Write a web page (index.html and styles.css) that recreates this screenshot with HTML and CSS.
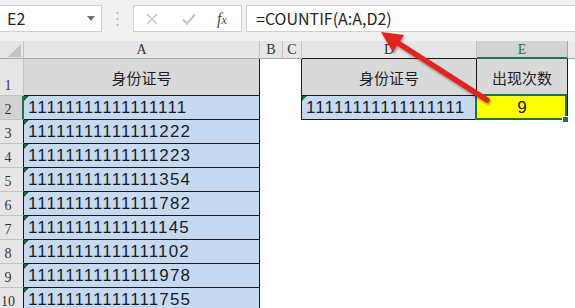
FILE: index.html
```html
<!DOCTYPE html>
<html>
<head>
<meta charset="utf-8">
<link rel="stylesheet" href="styles.css">
</head>
<body>
<div class="app">
  <div class="toolbar">
    <div class="namebox">
      <span>E2</span>
      <svg class="dd" width="8" height="5" viewBox="0 0 8 5"><path d="M0 0H8L4 5Z" fill="#707070"/></svg>
    </div>
    <div class="grip">
      <svg width="3" height="16" viewBox="0 0 3 16"><circle cx="1.5" cy="2" r="1" fill="#b0b0b0"/><circle cx="1.5" cy="8" r="1" fill="#b0b0b0"/><circle cx="1.5" cy="14" r="1" fill="#b0b0b0"/></svg>
    </div>
    <div class="fbtns">
      <svg width="12" height="12" viewBox="0 0 12 12"><path d="M1 1L11 11M11 1L1 11" stroke="#c4c4c4" stroke-width="1.6" fill="none"/></svg>
      <svg width="14" height="12" viewBox="0 0 14 12"><path d="M1 6.5L5 10.5L13 1.5" stroke="#c4c4c4" stroke-width="2.2" fill="none"/></svg>
      <span class="fx"><i>f</i><i class="x">x</i></span>
    </div>
    <div class="formula">=COUNTIF(A:A,D2)</div>
  </div>

  <div class="sheet">
    <!-- header row -->
    <div class="corner"><svg width="13" height="13" viewBox="0 0 13 13"><path d="M13 0V13H0Z" fill="#c4c4c4"/></svg></div>
    <div class="ch">A</div>
    <div class="ch">B</div>
    <div class="ch">C</div>
    <div class="ch chd">D</div>
    <div class="ch che">E</div>
    <div class="ch chf"></div>

    <!-- row 1 -->
    <div class="rh r1">1</div>
    <div class="hd">身份证号</div>
    <div class="blank"></div>
    <div class="blank edge"></div>
    <div class="hd">身份证号</div>
    <div class="hd">出现次数</div>
    <div class="blank"></div>

    <!-- row 2 -->
    <div class="rh rsel">2</div>
    <div class="num">11111111111111111</div>
    <div class="blank"></div>
    <div class="blank edge"></div>
    <div class="num">11111111111111111</div>
    <div class="res">9</div>
    <div class="blank"></div>

    <div class="rh">3</div>
    <div class="num">11111111111111222</div>
    <div class="blank"></div><div class="blank"></div><div class="blank"></div><div class="blank"></div><div class="blank"></div>

    <div class="rh">4</div>
    <div class="num">11111111111111223</div>
    <div class="blank"></div><div class="blank"></div><div class="blank"></div><div class="blank"></div><div class="blank"></div>

    <div class="rh">5</div>
    <div class="num">11111111111111354</div>
    <div class="blank"></div><div class="blank"></div><div class="blank"></div><div class="blank"></div><div class="blank"></div>

    <div class="rh">6</div>
    <div class="num">11111111111111782</div>
    <div class="blank"></div><div class="blank"></div><div class="blank"></div><div class="blank"></div><div class="blank"></div>

    <div class="rh">7</div>
    <div class="num">11111111111111145</div>
    <div class="blank"></div><div class="blank"></div><div class="blank"></div><div class="blank"></div><div class="blank"></div>

    <div class="rh">8</div>
    <div class="num">11111111111111102</div>
    <div class="blank"></div><div class="blank"></div><div class="blank"></div><div class="blank"></div><div class="blank"></div>

    <div class="rh">9</div>
    <div class="num">11111111111111978</div>
    <div class="blank"></div><div class="blank"></div><div class="blank"></div><div class="blank"></div><div class="blank"></div>

    <div class="rh">10</div>
    <div class="num">11111111111111755</div>
    <div class="blank"></div><div class="blank"></div><div class="blank"></div><div class="blank"></div><div class="blank"></div>
  </div>

  <svg class="arrow" width="575" height="308" viewBox="0 0 575 308">
    <defs>
      <filter id="sh" x="-20%" y="-20%" width="140%" height="140%">
        <feDropShadow dx="1" dy="2" stdDeviation="1.2" flood-color="#000" flood-opacity="0.35"/>
      </filter>
    </defs>
    <g filter="url(#sh)" fill="#e2201c" stroke="none">
      <path d="M487 100L398 43" stroke="#e2201c" stroke-width="5.5" stroke-linecap="round"/>
      <path d="M381 32L404 35L393 52Z"/>
    </g>
  </svg>
</div>
</body>
</html>
```

FILE: styles.css
```css
html, body {
  margin: 0;
  padding: 0;
  background: #ffffff;
}

.app {
  position: relative;
  width: 575px;
  height: 308px;
  overflow: hidden;
}

.toolbar {
  height: 41px;
  box-sizing: border-box;
  padding-top: 5px;
  background: #f1f1f1;
  display: flex;
  align-items: flex-start;
  font-family: "Noto Sans CJK SC", "Noto Sans", sans-serif;
  font-size: 16px;
  color: #262626;
}

.namebox {
  width: 102px;
  height: 27px;
  box-sizing: border-box;
  background: #fff;
  border: 1px solid #d0d0d0;
  border-left: none;
  display: flex;
  align-items: center;
  justify-content: space-between;
  padding: 0 6px 0 7px;
}

.namebox span {
  line-height: 25px;
}

.grip {
  width: 31px;
  height: 27px;
  display: flex;
  align-items: center;
  justify-content: center;
}

.fbtns {
  width: 109px;
  height: 27px;
  box-sizing: border-box;
  background: #fff;
  border: 1px solid #d0d0d0;
  display: flex;
  align-items: center;
  padding-left: 12px;
  gap: 24px;
}

.fx {
  font-family: "Liberation Serif", serif;
  font-size: 16px;
  color: #4a4a4a;
  margin-left: -3px;
}

.fx .x {
  font-size: 12px;
}

.formula {
  margin-left: 4px;
  flex: 1;
  height: 27px;
  box-sizing: border-box;
  background: #fff;
  border: 1px solid #d0d0d0;
  border-right: none;
  padding-left: 9px;
  line-height: 25px;
}

.sheet {
  display: grid;
  grid-template-columns: 24px 236px 23px 19px 175px 91px 1fr;
  grid-template-rows: 18px 37px repeat(9, 24px);
}

.sheet > div {
  box-sizing: border-box;
}

.corner {
  background: #e6e6e6;
  border-right: 1px solid #c4c4c4;
  border-bottom: 1px solid #a8a8a8;
  display: flex;
  align-items: flex-end;
  justify-content: flex-end;
  padding: 0 2px 1px 0;
}

.ch {
  background: #e6e6e6;
  border-right: 1px solid #c4c4c4;
  border-bottom: 1px solid #a8a8a8;
  font-family: "Liberation Serif", serif;
  font-size: 14px;
  line-height: 14px;
  color: #333;
  display: flex;
  justify-content: center;
  align-items: flex-end;
  padding-bottom: 1px;
}

.chd {
  border-bottom-color: #1a1a1a;
}

.che {
  background: #d3d3d3;
  color: #217346;
  border-bottom: 2px solid #217346;
  border-right-color: #a8a8a8;
  padding-bottom: 0;
}

.chf {
  background: #ececec;
  border-right: none;
}

.rh {
  background: #e6e6e6;
  border-right: 1px solid #1a1a1a;
  border-bottom: 1px solid #c4c4c4;
  font-family: "Liberation Serif", serif;
  font-size: 14px;
  line-height: 14px;
  color: #333;
  display: flex;
  justify-content: center;
  align-items: flex-end;
  padding: 0 7px 2px 0;
}

.r1 {
  border-right-color: #c4c4c4;
}

.rsel {
  background: #d3d3d3;
  border-right: 2px solid #217346;
  padding-right: 6px;
}

.hd {
  background: #d9d9d9;
  border-right: 1px solid #1a1a1a;
  border-bottom: 1px solid #1a1a1a;
  font-family: "Noto Sans CJK SC", sans-serif;
  font-size: 15px;
  color: #1f1f1f;
  display: flex;
  align-items: center;
  justify-content: center;
}

.num {
  position: relative;
  background: #c5d9f1;
  border-right: 1px solid #1a1a1a;
  border-bottom: 1px solid #1a1a1a;
  font-family: "Liberation Sans", sans-serif;
  font-size: 17px;
  letter-spacing: 1.1px;
  line-height: 23px;
  color: #1c1c1c;
  padding-left: 4px;
  white-space: nowrap;
}

.num::before {
  content: "";
  position: absolute;
  left: 0;
  top: 0;
  border-top: 5px solid #1e6b3a;
  border-right: 5px solid transparent;
}

.res {
  position: relative;
  background: #ffff00;
  border-right: 1px solid #1a1a1a;
  border-bottom: 1px solid #1a1a1a;
  font-family: "Liberation Sans", sans-serif;
  font-size: 17px;
  line-height: 23px;
  color: #1c1c1c;
  text-align: center;
}

.res::after {
  content: "";
  position: absolute;
  left: -2px;
  top: -2px;
  right: 0;
  bottom: -1px;
  border: 2px solid #217346;
}

.res::before {
  content: "";
  position: absolute;
  right: -2px;
  bottom: -4px;
  width: 5px;
  height: 5px;
  background: #217346;
  border: 1px solid #fff;
  z-index: 1;
}

.blank {
  background: #fff;
}

.edge {
  border-right: 1px solid #1a1a1a;
}

.arrow {
  position: absolute;
  left: 0;
  top: 0;
  pointer-events: none;
}
```
